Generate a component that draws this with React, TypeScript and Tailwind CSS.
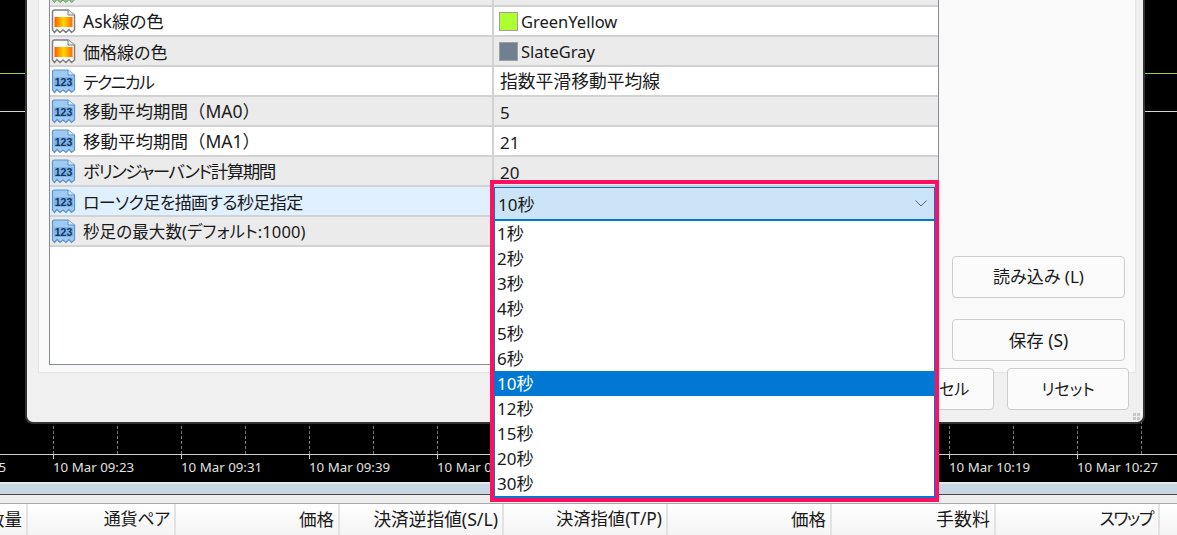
const FONT = "font-['Noto_Sans','Noto_Sans_CJK_JP',sans-serif] [font-feature-settings:'palt']";
const PLAIN = "[font-feature-settings:normal]";

type Row = { label: string; labelCls: string; value: string; valueCls?: string; icon: "color" | "num" | "green"; swatch?: string };

const ROWS: Row[] = [
  { label: "平均線の色（MA0の色）", labelCls: "text-[16.5px]", value: "", icon: "green" },
  { label: "Ask線の色", labelCls: "text-[17.5px]", value: "GreenYellow", valueCls: "text-[16.5px]", icon: "color", swatch: "bg-[#adff2f]" },
  { label: "価格線の色", labelCls: "text-[17px]", value: "SlateGray", valueCls: "text-[16.5px]", icon: "color", swatch: "bg-[#708090]" },
  { label: "テクニカル", labelCls: "text-[17px] tracking-[-1.5px]", value: "指数平滑移動平均線", valueCls: "text-[17.8px]", icon: "num" },
  { label: "移動平均期間（MA0）", labelCls: `text-[17.5px] ${PLAIN}`, value: "5", valueCls: "text-[17px]", icon: "num" },
  { label: "移動平均期間（MA1）", labelCls: `text-[17.5px] ${PLAIN}`, value: "21", valueCls: "text-[17px]", icon: "num" },
  { label: "ボリンジャーバンド計算期間", labelCls: "text-[17.5px] tracking-[-1.5px]", value: "20", valueCls: "text-[17px]", icon: "num" },
  { label: "ローソク足を描画する秒足指定", labelCls: "text-[17px] tracking-[-0.6px]", value: "", icon: "num" },
  { label: "秒足の最大数(デフォルト:1000)", labelCls: "text-[16.5px] tracking-[0.1px]", value: "", icon: "num" },
];

const OPTIONS = ["1秒", "2秒", "3秒", "4秒", "5秒", "6秒", "10秒", "12秒", "15秒", "20秒", "30秒"];
// ドロップダウンに隠れる時刻ラベルは空
const TIMES = ["09:15", "09:23", "09:31", "09:39", "09:47", "", "", "", "10:19", "10:27"];
const COLUMNS = [
  { label: "数量", w: "w-[28px]", cls: "pr-[4px] text-[17.5px]" },
  { label: "通貨ペア", w: "w-[148px]", cls: "pr-[4px] text-[17px] tracking-[-0.2px]" },
  { label: "価格", w: "w-[164px]", cls: "pr-[4px] text-[17.5px]" },
  { label: "決済逆指値(S/L)", w: "w-[164px]", cls: "pr-[4px] text-[17.7px]" },
  { label: "決済指値(T/P)", w: "w-[164px]", cls: "pr-[4px] text-[17.3px]" },
  { label: "価格", w: "w-[164px]", cls: "pr-[4px] text-[17.5px]" },
  { label: "手数料", w: "w-[164px]", cls: "pr-[4px] text-[18px]" },
  { label: "スワップ", w: "w-[164px]", cls: "pr-[5px] text-[17px] tracking-[-1.5px]" },
];

// 紙の形(下がギザギザ)のパラメータアイコン
function ParamIcon({ kind }: { kind: Row["icon"] }) {
  const paper = "M1.5 3 Q1.5 1 3.5 1 H17 L23.5 6 V21 L20.5 23.5 L18 20.5 L15 23.5 L12 21 L9 23.5 L6 20.5 L3.5 23.5 L1.5 21 Z";
  if (kind === "num") {
    return (
      <svg width="25" height="25" viewBox="0 0 25 25" className="shrink-0">
        <path d={paper} fill="#9fcbf3" stroke="#5f92c8" strokeWidth="1.2" />
        <path d="M17 1 V6 H23.5" fill="#d6e8f8" stroke="#5f92c8" strokeWidth="1" />
        <rect x="3" y="8" width="19" height="10" rx="1" fill="#7fb2e6" />
        <text x="12.5" y="16.8" textAnchor="middle" fontSize="10.5" fontWeight="700" fill="#0f3560" fontFamily="Liberation Sans">
          123
        </text>
      </svg>
    );
  }
  if (kind === "green") {
    return (
      <svg width="25" height="25" viewBox="0 0 25 25" className="shrink-0">
        <path d={paper} fill="#8fc98a" stroke="#6fa06c" strokeWidth="1" />
      </svg>
    );
  }
  return (
    <svg width="25" height="25" viewBox="0 0 25 25" className="shrink-0">
      <defs>
        <linearGradient id="heat" x1="0" x2="1" y1="0" y2="0">
          <stop offset="0" stopColor="#ff5a00" />
          <stop offset="0.5" stopColor="#ffd800" />
          <stop offset="1" stopColor="#ff6a00" />
        </linearGradient>
      </defs>
      <path d={paper} fill="#fafafa" stroke="#808080" strokeWidth="1.5" />
      <path d="M17 1 V6 H23.5" fill="#e8e8e8" stroke="#808080" strokeWidth="1" />
      <rect x="3.5" y="8" width="18" height="10" fill="url(#heat)" />
    </svg>
  );
}

function SideButton({ label, className }: { label: string; className?: string }) {
  return (
    <button className={`h-[42px] rounded-[4px] border border-[#cdcdcd] bg-[#fbfbfb] text-[#1a1a1a] ${className ?? "text-[17px]"}`}>
      {label}
    </button>
  );
}

function ParamTable() {
  return (
    <div className="h-[389px] w-[890px] shrink-0 border border-[#858a94] bg-white leading-none text-[#1a1a1a]">
      {ROWS.map((row, i) => (
        <div
          key={row.label}
          className={`flex h-[30px] items-center border-b-2 border-[#d2d2d2] ${
            i === 7 ? "bg-[#e0f0fe]" : i % 2 === 0 ? "bg-[#ebebeb]" : "bg-white"
          }`}
        >
          <div className="flex h-full w-[444px] shrink-0 items-center gap-[7px] whitespace-nowrap border-r-2 border-[#d2d2d2] pl-[1px]">
            <ParamIcon kind={row.icon} />
            <span className={`${row.labelCls} pt-[2px]`}>{row.label}</span>
          </div>
          <div className={`flex items-center gap-[3px] ${row.swatch ? "pl-[5px]" : "pl-[6px]"}`}>
            {row.swatch && <span className={`h-[19px] w-[19px] border border-[#a0a0a0] ${row.swatch}`} />}
            <span className={`${row.valueCls ?? ""} pt-[2px]`}>{row.value}</span>
          </div>
        </div>
      ))}
    </div>
  );
}

function SettingsDialog() {
  return (
    <div className="absolute left-[25px] top-[-40px] flex h-[464px] w-[1120px] flex-col rounded-lg border-2 border-[#333333] bg-[#f0f0f0] pl-[11px] pr-[14px] pt-[3px]">
      <div className="h-[408px] w-[1098px] shrink-0 border border-[#e6e6e6] bg-[#f9f9f9] pl-[10px] pt-[10px]">
        <div className="flex">
          <ParamTable />
          <div className="ml-[13px] flex w-[173px] flex-col gap-[21px] pt-[280px]">
            <SideButton label="読み込み (L)" />
            <SideButton label="保存 (S)" className="text-[17.5px]" />
          </div>
        </div>
      </div>
      <div className="-mt-[5px] flex justify-end gap-[13px]">
        <SideButton label="キャンセル" className="h-[41px] w-[122px] text-[16px]" />
        <SideButton label="リセット" className="h-[41px] w-[122px] text-[16px]" />
      </div>
      {/* リサイズグリップ */}
      <div className="absolute bottom-[2px] right-[3px] grid grid-cols-2 gap-px">
        <span className="h-[3px] w-[3px] bg-[#c8c8c8]" />
        <span className="h-[3px] w-[3px] bg-[#c8c8c8]" />
        <span className="h-[3px] w-[3px] bg-[#c8c8c8]" />
        <span className="h-[3px] w-[3px] bg-[#c8c8c8]" />
      </div>
    </div>
  );
}

function ComboDropdown() {
  return (
    <div className="absolute left-[490px] top-[180px] h-[322px] w-[449px] border-4 border-[#ff1060] pt-[3px] text-[17px] leading-none text-[#1a1a1a]">
      <div className="flex h-[34px] items-center justify-between border-x border-t border-b-2 border-[#0078d4] bg-[#cce4f7] pl-[3px] pr-[7px]">
        <span className="pt-[2px]">10秒</span>
        <svg width="12" height="7" viewBox="0 0 12 7" fill="none" stroke="#5f6368" strokeWidth="1">
          <path d="M0.5 0.5 L6 6 L11.5 0.5" />
        </svg>
      </div>
      <div className="border-x border-b-2 border-[#0078d4] bg-white">
        {OPTIONS.map((opt) => (
          <div key={opt} className={`flex h-[25px] items-center pl-[2px] ${opt === "10秒" ? "bg-[#0078d4] text-white" : ""}`}>
            {opt}
          </div>
        ))}
      </div>
    </div>
  );
}

export default function App() {
  return (
    <div className={`relative h-[535px] w-[1177px] overflow-hidden bg-black ${FONT}`}>
      {/* チャート */}
      <div className="relative h-[482px] w-full">
        <div className="absolute left-0 right-0 top-[73px] h-px bg-[#9acd32]" />
        <div className="absolute left-0 right-0 top-[111px] h-px bg-[#d8d4c8]" />
        <div className="flex h-[454px] pl-[53px]">
          {Array.from({ length: 18 }).map((_, i) => (
            <div key={i} className="h-full w-[64px] shrink-0 border-l border-dashed border-[#7a7a7a]" />
          ))}
        </div>
        <div className="h-px bg-[#d0d0d0]" />
        <div className="flex h-[4px] pl-[53px]">
          {TIMES.map((t, i) => (
            <div key={i} className="w-[128px] shrink-0 border-l border-[#d0d0d0]" />
          ))}
        </div>
        <div className="-ml-[75px] flex h-[18px] whitespace-nowrap text-[13.3px] leading-[16px] text-[#e0e0e0]">
          {TIMES.map((t, i) => (
            <span key={i} className="w-[128px] shrink-0">
              {t && `10 Mar ${t}`}
            </span>
          ))}
        </div>
        <SettingsDialog />
      </div>

      {/* 下部パネル */}
      <div className="h-[2px] bg-[#e8e8e8]" />
      <div className="h-[10px] bg-[#c9d7e4]" />
      <div className="h-px bg-[#4a4a4a]" />
      <div className="h-[8px] bg-[#eeeeee]" />
      <div className="flex h-[32px] border-t border-[#aaaaaa] bg-gradient-to-b from-white to-[#f4f4f4] leading-[30px] text-[#1a1a1a]">
        {COLUMNS.map((c, i) => (
          <div key={i} className={`${c.w} flex shrink-0 justify-end overflow-hidden whitespace-nowrap border-r-2 border-[#e2e2e2] ${c.cls}`}>
            <span className="shrink-0">{c.label}</span>
          </div>
        ))}
      </div>

      <ComboDropdown />
    </div>
  );
}
